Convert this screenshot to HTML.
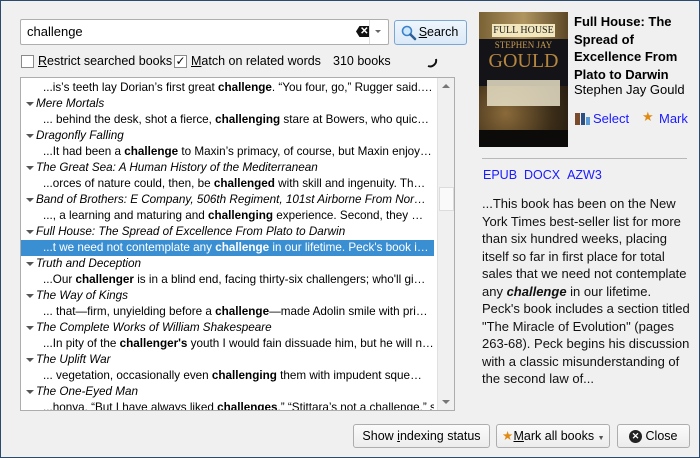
<!DOCTYPE html>
<html><head><meta charset="utf-8"><style>
*{box-sizing:border-box;margin:0;padding:0}
body{width:700px;height:458px;background:#f0f0f0;font-family:"Liberation Sans",sans-serif;font-size:12.5px;color:#000;position:relative;overflow:hidden;border:1px solid #2c4a6e}
.abs{position:absolute}
.inp{left:19px;top:18px;width:369px;height:26px;background:#fff;border:1px solid #aeaeae;border-radius:2px}
.btn{background:linear-gradient(#fbfbfb,#ececec);border:1px solid #adadad;border-radius:3px;text-align:center;line-height:22px;font-size:12.5px}
.cb{width:13px;height:13px;border:1px solid #8a8a8a;background:#fff}
.list{left:19px;top:76px;width:435px;height:334px;background:#fff;border:1px solid #adadad;overflow:hidden}
.row{height:16px;line-height:16px;white-space:nowrap;overflow:hidden;text-overflow:ellipsis;font-size:11.7px;width:413px}
.t{padding-left:15px;font-style:italic;position:relative}
.t:before{content:"";position:absolute;left:5px;top:6px;border-left:4px solid transparent;border-right:4px solid transparent;border-top:4px solid #555}
.m{padding-left:22px}
.sel{background:#3a8fd2;color:#fff}
.sb{position:absolute;right:0;top:0;width:17px;height:100%;background:#f0f0f0;border-left:1px solid #e0e0e0}
.rt{left:481px;top:194px;width:215px;font-size:13px;line-height:17.5px;color:#111;white-space:nowrap}
a{color:#1a1aff;text-decoration:none}
u{text-decoration:underline}
</style></head><body>
<div class="abs inp">
 <div class="abs" style="left:6px;top:4px;font-size:13px">challenge</div>
 <div class="abs" style="left:335px;top:6px;width:14px;height:11px;background:#111;border-radius:2px 1px 1px 2px;color:#fff;font-size:10px;line-height:11px;text-align:center;font-weight:bold;clip-path:polygon(25% 0,100% 0,100% 100%,25% 100%,0 50%)">&nbsp;✕</div>
 <div class="abs" style="left:348px;top:0;width:1px;height:24px;background:#ddd"></div>
 <div class="abs" style="left:354px;top:10px;border-left:3px solid transparent;border-right:3px solid transparent;border-top:3px solid #666"></div>
</div>
<div class="abs btn" style="left:393px;top:19px;width:73px;height:25px;border-color:#7aa6d4;background:linear-gradient(#eef5fc,#dbe9f7);line-height:23px;padding-left:16px">
 <svg class="abs" style="left:6px;top:4px" width="16" height="16" viewBox="0 0 16 16"><circle cx="6" cy="6" r="4.5" fill="#cfe7fb" stroke="#3b82c9" stroke-width="1.6"/><path d="M9.5 9.5L14 14" stroke="#2d5f98" stroke-width="2.6" stroke-linecap="round"/></svg><u>S</u>earch</div>
<div class="abs cb" style="left:20px;top:54px"></div>
<div class="abs" style="left:37px;top:53px"><u>R</u>estrict searched books</div>
<div class="abs cb" style="left:173px;top:54px;font-size:12px;line-height:11px;text-align:center">✓</div>
<div class="abs" style="left:190px;top:53px"><u>M</u>atch on related words</div>
<div class="abs" style="left:332px;top:53px">310 books</div>
<svg class="abs" style="left:425px;top:56px" width="12" height="12" viewBox="0 0 12 12"><path d="M10 2 A6 6 0 0 1 2 9" fill="none" stroke="#111" stroke-width="2"/></svg>
<div class="abs list">
<div style="padding-top:2px">
<div class="row m">...is’s teeth lay Dorian’s first great <b>challenge</b>. “You four, go,” Rugger said. Dorian and his friends</div>
<div class="row t">Mere Mortals</div>
<div class="row m">... behind the desk, shot a fierce, <b>challenging</b> stare at Bowers, who quickly and nervously</div>
<div class="row t">Dragonfly Falling</div>
<div class="row m">...It had been a <b>challenge</b> to Maxin’s primacy, of course, but Maxin enjoyed such things</div>
<div class="row t">The Great Sea: A Human History of the Mediterranean</div>
<div class="row m" style="width:405px">...orces of nature could, then, be <b>challenged</b> with skill and ingenuity. The power of</div>
<div class="row t">Band of Brothers: E Company, 506th Regiment, 101st Airborne From Normandy to Hitler</div>
<div class="row m" style="width:405px">..., a learning and maturing and <b>challenging</b> experience. Second, they knew that</div>
<div class="row t">Full House: The Spread of Excellence From Plato to Darwin</div>
<div class="row m sel" style="width:413px">...t we need not contemplate any <b>challenge</b> in our lifetime. Peck's book includes a section</div>
<div class="row t">Truth and Deception</div>
<div class="row m" style="width:405px">...Our <b>challenger</b> is in a blind end, facing thirty-six challengers; who'll give way first</div>
<div class="row t">The Way of Kings</div>
<div class="row m">... that—firm, unyielding before a <b>challenge</b>—made Adolin smile with pride. ... and more</div>
<div class="row t">The Complete Works of William Shakespeare</div>
<div class="row m">...In pity of the <b>challenger's</b> youth I would fain dissuade him, but he will not be entreated</div>
<div class="row t">The Uplift War</div>
<div class="row m" style="width:405px">... vegetation, occasionally even <b>challenging</b> them with impudent squeaks. ... more</div>
<div class="row t">The One-Eyed Man</div>
<div class="row m" style="text-overflow:clip">...honya. “But I have always liked <b>challenges</b>.” “Stittara’s not a challenge,” sa</div>
</div>
<div class="sb"><div class="abs" style="left:4px;top:6px;border-left:4px solid transparent;border-right:4px solid transparent;border-bottom:4px solid #777"></div>
<div class="abs" style="left:1px;top:109px;width:15px;height:24px;background:#fafafa;border:1px solid #dcdcdc"></div>
<div class="abs" style="left:4px;bottom:6px;border-left:4px solid transparent;border-right:4px solid transparent;border-top:4px solid #777"></div></div>
</div>
<!-- cover -->
<div class="abs" style="left:478px;top:11px;width:89px;height:135px;background:radial-gradient(circle at 30% 75%,#8a6a3a,#3a2c18 40%,#1b140c 70%);overflow:hidden">
 <div class="abs" style="left:0;top:0;width:89px;height:30px;background:linear-gradient(90deg,#7a6236,#b09560,#5c4826)"></div>
 <div class="abs" style="left:13px;top:12px;width:63px;height:13px;background:#f2e7bd;font-family:'Liberation Serif',serif;font-size:10px;line-height:13px;text-align:center;color:#222">FULL HOUSE</div>
 <div class="abs" style="left:0;top:27px;width:89px;height:47px;background:#141418"></div>
 <div class="abs" style="left:0;top:28px;width:89px;font-family:'Liberation Serif',serif;font-size:9px;text-align:center;color:#c69a52">STEPHEN JAY</div>
 <div class="abs" style="left:0;top:38px;width:89px;font-family:'Liberation Serif',serif;font-size:20px;line-height:22px;text-align:center;color:#b7873f">GOULD</div>
 <div class="abs" style="left:8px;top:68px;width:73px;height:26px;background:#e8e0c8;opacity:.85"></div>
 <div class="abs" style="left:0;top:118px;width:89px;height:17px;background:#0c0b0a"></div>
</div>
<div class="abs" style="left:573px;top:12px;width:125px;font-weight:bold;font-size:13px;line-height:17.5px">Full House: The Spread of Excellence From Plato to Darwin</div>
<div class="abs" style="left:573px;top:81px;font-size:13px">Stephen Jay Gould</div>
<div class="abs" style="left:574px;top:112px;width:5px;height:12px;background:#7a4b2a"></div>
<div class="abs" style="left:580px;top:112px;width:4px;height:12px;background:#2c4f86"></div>
<div class="abs" style="left:585px;top:116px;width:4px;height:8px;background:#5a9bd5"></div>
<a class="abs" style="left:592px;top:110px;font-size:13px">Select</a>
<div class="abs" style="left:641px;top:108px;color:#e08a12;font-size:13px">★</div>
<a class="abs" style="left:658px;top:110px;font-size:13px">Mark</a>
<div class="abs" style="left:481px;top:157px;width:205px;height:1px;background:#b8b8b8"></div>
<div class="abs" style="left:482px;top:167px;font-size:12.5px"><a>EPUB</a>&nbsp;&nbsp;<a>DOCX</a>&nbsp;&nbsp;<a>AZW3</a></div>
<div class="abs rt">...This book has been on the New<br>York Times best-seller list for more<br>than six hundred weeks, placing<br>itself so far in first place for total<br>sales that we need not contemplate<br>any <b><i>challenge</i></b> in our lifetime.<br>Peck's book includes a section titled<br>"The Miracle of Evolution" (pages<br>263-68). Peck begins his discussion<br>with a classic misunderstanding of<br>the second law of...</div>
<div class="abs btn" style="left:352px;top:423px;width:137px;height:24px">Show <u>i</u>ndexing status</div>
<div class="abs btn" style="left:495px;top:423px;width:114px;height:24px;padding-left:12px"><span class="abs" style="left:5px;top:0;color:#e08a12">★</span><u>M</u>ark all books <span style="font-size:7px;color:#555">▼</span></div>
<div class="abs btn" style="left:616px;top:423px;width:73px;height:24px;padding-left:16px"><span class="abs" style="left:11px;top:5px;width:13px;height:13px;border-radius:50%;background:#222;color:#fff;font-size:9px;line-height:13px;font-weight:bold">✕</span>Close</div>
</body></html>
